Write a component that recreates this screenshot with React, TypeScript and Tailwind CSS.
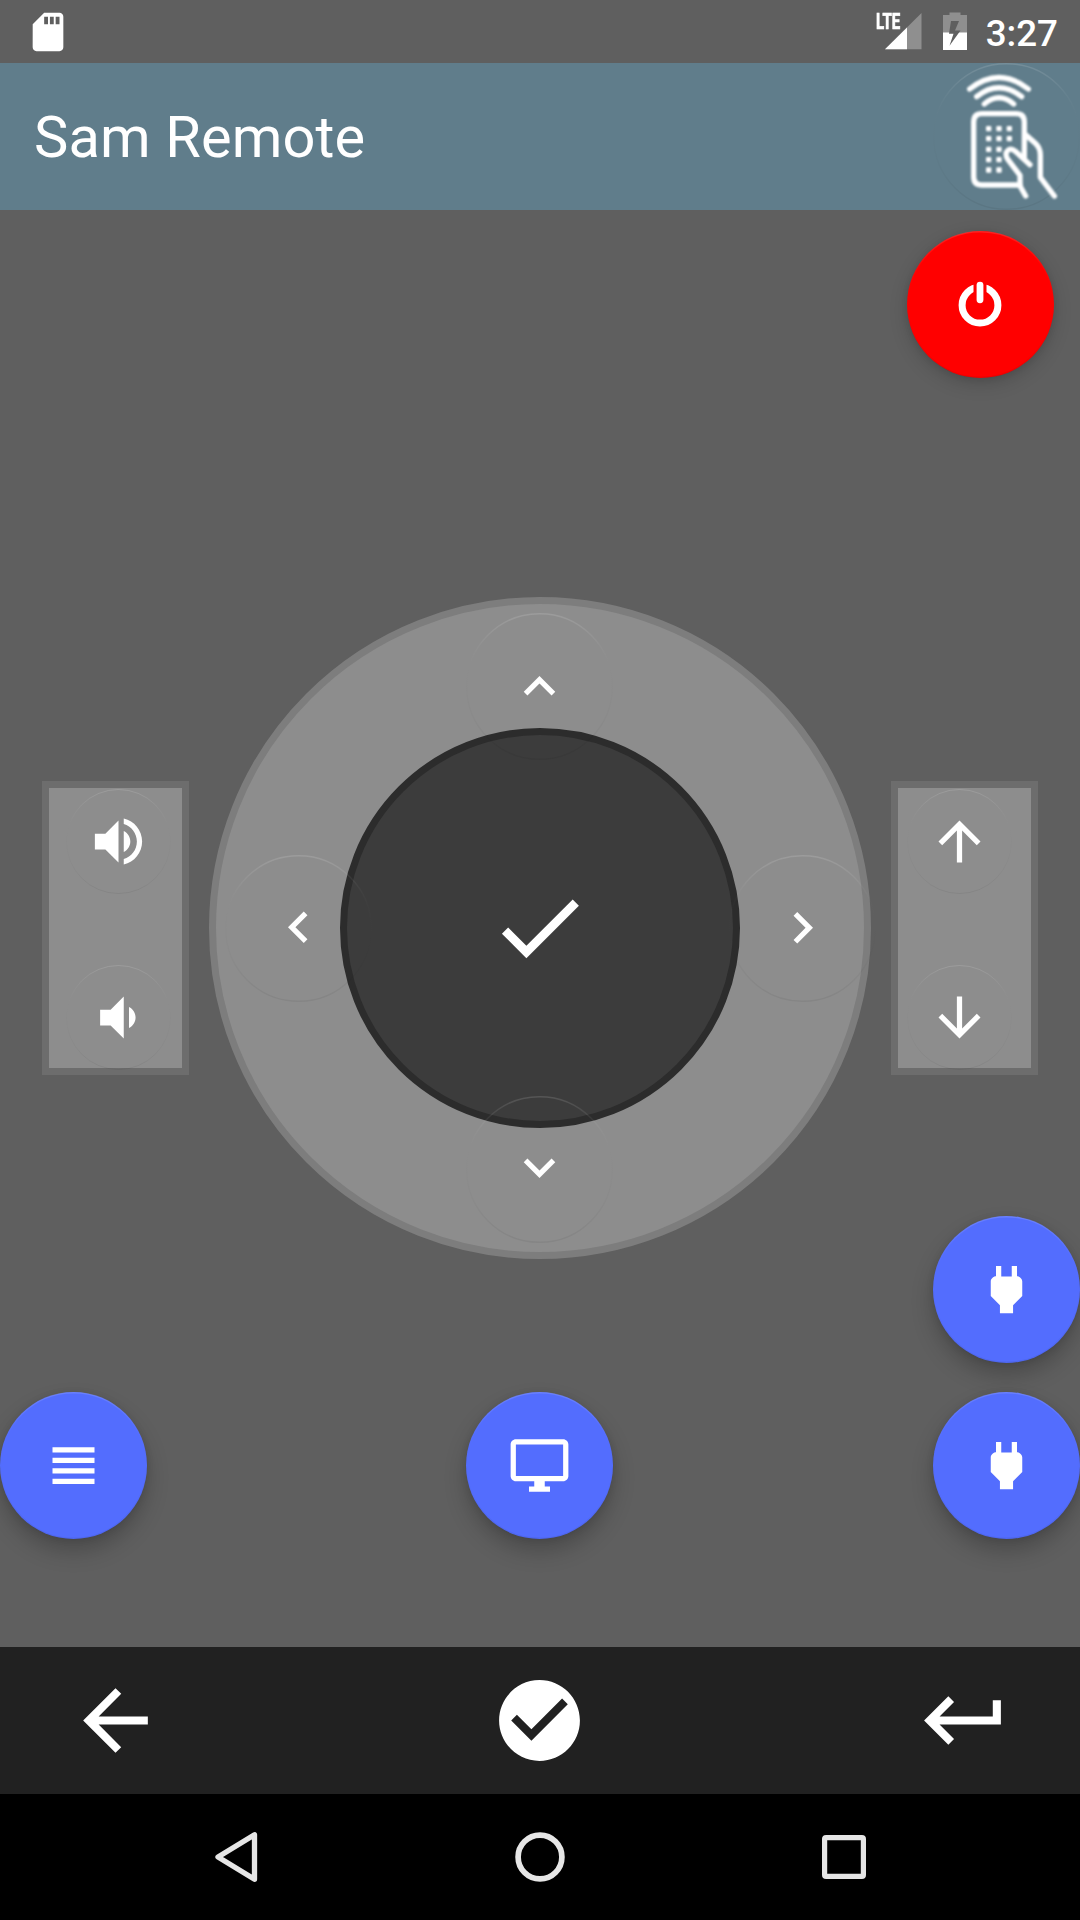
import React from "react";

const paths = {
  sd: "M18 2h-8L4.02 8 4 20c0 1.1.9 2 2 2h12c1.1 0 2-.9 2-2V4c0-1.1-.9-2-2-2zm-6 6h-2V4h2v4zm3 0h-2V4h2v4zm3 0h-2V4h2v4z",
  up: "M7.41 15.41L12 10.83l4.59 4.58L18 14l-6-6-6 6z",
  left: "M15.41 16.09l-4.58-4.59 4.58-4.59L14 5.5l-6 6 6 6z",
  right: "M8.59 16.34l4.58-4.59-4.58-4.59L10 5.75l6 6-6 6z",
  down: "M7.41 7.84L12 12.42l4.59-4.58L18 9.25l-6 6-6-6z",
  check: "M9 16.17L4.83 12l-1.42 1.41L9 19 21 7l-1.41-1.41z",
  volumeUp:
    "M3 9v6h4l5 5V4L7 9H3zm13.5 3c0-1.77-1.02-3.29-2.5-4.03v8.05c1.48-.73 2.5-2.25 2.5-4.02zM14 3.23v2.06c2.89.86 5 3.54 5 6.71s-2.11 5.85-5 6.71v2.06c4.01-.91 7-4.49 7-8.77s-2.99-7.86-7-8.77z",
  volumeDown: "M18.5 12c0-1.77-1.02-3.29-2.5-4.03v8.05c1.48-.73 2.5-2.25 2.5-4.02zM5 9v6h4l5 5V4L9 9H5z",
  arrowUp: "M4 12l1.41 1.41L11 7.83V20h2V7.83l5.58 5.59L20 12l-8-8-8 8z",
  arrowDown: "M20 12l-1.41-1.41L13 16.17V4h-2v12.17l-5.58-5.59L4 12l8 8 8-8z",
  plug: "M16.01 7L16 3h-2v4h-4V3H8v4h-.01C7 6.99 6 7.99 6 8.99v5.49L9.5 18v3h5v-3l3.5-3.51v-5.5c0-1-1-2-1.99-1.99z",
  lines: "M4 15h16v-2H4v2zm0 4h16v-2H4v2zm0-8h16V9H4v2zm0-6v2h16V5H4z",
  monitor:
    "M21 2H3c-1.1 0-2 .9-2 2v12c0 1.1.9 2 2 2h7v2H8v2h8v-2h-2v-2h7c1.1 0 2-.9 2-2V4c0-1.1-.9-2-2-2zm0 14H3V4h18v12z",
  back: "M20 11H7.83l5.59-5.59L12 4l-8 8 8 8 1.41-1.41L7.83 13H20v-2z",
  checkCircle:
    "M12 2C6.48 2 2 6.48 2 12s4.480 10 10 10 10-4.480 10-10S17.520 2 12 2zm-2 15l-5-5 1.410-1.410L10 14.170l7.590-7.590L19 8l-9 9z",
  enter: "M19 7v4H5.83l3.58-3.59L8 6l-6 6 6 6 1.41-1.41L5.83 13H21V7z",
};

function Icon({ d, className = "size-[63px]" }: { d: string; className?: string }) {
  return (
    <svg viewBox="0 0 24 24" fill="currentColor" className={`shrink-0 ${className}`}>
      <path d={d} />
    </svg>
  );
}

/* Hairline highlight and shade that outlines every floating button. */
function Rim() {
  const id = React.useId();
  return (
    <svg viewBox="0 0 147 147" className="absolute inset-0 size-full">
      <defs>
        <linearGradient id={id} x1="0" y1="0" x2="0" y2="1">
          <stop offset="0" stopColor="#fff" stopOpacity="0.13" />
          <stop offset="0.22" stopColor="#fff" stopOpacity="0.03" />
          <stop offset="0.35" stopColor="#888" stopOpacity="0.02" />
          <stop offset="0.7" stopColor="#000" stopOpacity="0.02" />
          <stop offset="1" stopColor="#000" stopOpacity="0.06" />
        </linearGradient>
      </defs>
      <circle cx="73.5" cy="73.5" r="72.8" fill="none" stroke={`url(#${id})`} strokeWidth="1.4" />
    </svg>
  );
}

function RoundButton({
  label,
  className = "size-[147px]",
  children,
}: {
  label: string;
  className?: string;
  children: React.ReactNode;
}) {
  return (
    <button aria-label={label} className={`flex shrink-0 items-center justify-center rounded-full ${className}`}>
      <Rim />
      {children}
    </button>
  );
}

const blue =
  "relative size-[147px] bg-[#536dfe] shadow-[0_12px_22px_rgba(0,0,0,0.22),0_1px_7px_rgba(0,0,0,0.1)]";

function StatusBar() {
  return (
    <div className="flex h-[63px] items-center justify-between pr-[22px] pl-[24.5px]">
      <Icon d={paths.sd} className="size-[46px]" />
      <div className="flex h-full items-center">
        <div className="relative">
          <svg viewBox="0 0 46 63" className="h-[63px] w-[46px]">
            <path d="M45.5 13v36.3H9z" fill="#8f8f8f" />
            <path d="M31 27.6v21.7H9z" fill="#fff" />
          </svg>
          <span className="absolute top-[10px] left-0 origin-left scale-x-[0.67] text-[22.5px] leading-[22px] font-bold [-webkit-text-stroke:0.7px_white]">
            LTE
          </span>
        </div>
        <svg viewBox="0 0 24 63" className="ml-[21px] h-[63px] w-6">
          <path d="M6.5 12.4h11V15H24v17.5H0V15h6.5z" fill="#8f8f8f" />
          <path d="M0 32.4h24V50H0z" fill="#fff" />
          <path d="M8 21h8l-4 9.5h5.5L6.5 45.8l4-12.1H6z" fill="#5f5f5f" />
        </svg>
        <span className="ml-[19px] text-[36.75px] leading-[44px] font-medium">
          <span className="relative top-[2px]">3:27</span>
        </span>
      </div>
    </div>
  );
}

const dots = [
  [446, 386], [477, 386], [508, 386],
  [446, 416], [477, 416], [508, 416],
  [446, 448], [477, 448],
  [446, 479], [477, 479],
  [446, 510], [477, 510],
];

function RemoteIcon() {
  return (
    <svg viewBox="279 189 441 441" className="size-[147px] blur-[0.8px]">
      <g fill="none" stroke="#fff" strokeWidth="16" strokeLinecap="round" strokeLinejoin="round">
        <path d="M389 267Q477 198 565 267M410 290Q477 237 545 290M433 312Q477 275 521 312" />
        <path d="M553 475V366Q553 341 528 341H426Q401 341 401 366V530Q401 555 426 555H540" />
        <path d="M570 494L526 454Q511 441 501 454Q494 464 504 479L540 526V558L557 588" />
        <path d="M557 404L586 430Q601 444 601 465V532L643 588" />
      </g>
      {dots.map(([x, y]) => (
        <rect key={`${x}-${y}`} x={x - 8} y={y - 8} width="16" height="16" rx="3" fill="#fff" />
      ))}
    </svg>
  );
}

function AppBar() {
  return (
    <header className="flex h-[147px] items-center justify-between overflow-hidden bg-[#607d8b] pl-[34px]">
      <h1 className="text-[57.75px] leading-[68px] tracking-[0.14px]">Sam Remote</h1>
      <RoundButton label="Remotes" className="relative size-[147px]">
        <RemoteIcon />
      </RoundButton>
    </header>
  );
}

function Rocker({ className, top, bottom }: { className: string; top: [string, string]; bottom: [string, string] }) {
  return (
    <div
      className={`flex h-[294px] w-[147px] shrink-0 flex-col gap-[71px] border-[7px] border-[#6d6d6d] bg-[#8d8d8d] pt-px ${className}`}
    >
      {[top, bottom].map(([label, d]) => (
        <RoundButton key={label} label={label} className="relative size-[105px]">
          <Icon d={d} />
        </RoundButton>
      ))}
    </div>
  );
}

function DirectionPad() {
  return (
    <div className="relative flex size-[662px] shrink-0 items-center justify-center rounded-full border-[7px] border-[#7d7d7d] bg-[#8d8d8d]">
      <button
        aria-label="Select"
        className="flex size-[400px] items-center justify-center rounded-full border-[7px] border-[#2c2c2c] bg-[#3c3c3c] pr-px pb-px"
      >
        <Icon d={paths.check} className="size-[105px]" />
      </button>
      <RoundButton label="Up" className="absolute top-[9px] left-[250px] size-[147px]">
        <Icon d={paths.up} />
      </RoundButton>
      <RoundButton label="Left" className="absolute top-[251px] left-[9px] size-[147px]">
        <Icon d={paths.left} />
      </RoundButton>
      <RoundButton label="Right" className="absolute top-[251px] left-[513px] size-[147px]">
        <Icon d={paths.right} />
      </RoundButton>
      <RoundButton label="Down" className="absolute top-[492px] left-[250px] size-[147px]">
        <Icon d={paths.down} />
      </RoundButton>
    </div>
  );
}

function PowerIcon() {
  return (
    <svg viewBox="0 0 48 48" className="size-12">
      <circle cx="24" cy="24.2" r="17.9" fill="none" stroke="#fff" strokeWidth="7" />
      <path d="M17.5 0h13v20h-13z" fill="#f00" />
      <rect x="20.6" y="0.7" width="6.8" height="21.5" rx="3.4" fill="#fff" />
    </svg>
  );
}

export default function App() {
  return (
    <div className="flex h-[1920px] w-[1080px] flex-col overflow-hidden bg-[#5f5f5f] font-[Roboto,sans-serif] text-white">
      <StatusBar />
      <AppBar />
      <main className="flex h-[1437px] flex-col">
        <div className="flex justify-end pt-[21px] pr-[26px]">
          <RoundButton
            label="Power"
            className="relative size-[147px] bg-[#ff0000] pr-px shadow-[0_6px_18px_rgba(0,0,0,0.17),0_1px_6px_rgba(0,0,0,0.08)]"
          >
            <PowerIcon />
          </RoundButton>
        </div>
        <div className="mt-[219px] flex items-center justify-center gap-5">
          <Rocker className="pl-[17px]" top={["Volume up", paths.volumeUp]} bottom={["Volume down", paths.volumeDown]} />
          <DirectionPad />
          <Rocker className="pl-[9px]" top={["Channel up", paths.arrowUp]} bottom={["Channel down", paths.arrowDown]} />
        </div>
        <div className="-mt-[43px] flex justify-end">
          <RoundButton label="Source" className={blue}>
            <Icon d={paths.plug} />
          </RoundButton>
        </div>
        <div className="mt-[29px] flex">
          <RoundButton label="Menu" className={blue}>
            <Icon d={paths.lines} />
          </RoundButton>
          <div className="ml-[319px] flex flex-1 justify-between">
            <RoundButton label="Display" className={blue}>
              <Icon d={paths.monitor} />
            </RoundButton>
            <RoundButton label="Input" className={blue}>
              <Icon d={paths.plug} />
            </RoundButton>
          </div>
        </div>
      </main>
      <div className="flex h-[147px] items-center justify-between bg-[#212121] px-[67px]">
        <Icon d={paths.back} className="size-[97px]" />
        <Icon d={paths.checkCircle} className="mr-px size-[97px]" />
        <Icon d={paths.enter} className="size-[97px]" />
      </div>
      <nav className="flex h-[126px] items-center justify-center gap-[248px] bg-black text-[#e6e6e6]">
        <svg viewBox="0 0 56 56" className="size-14" fill="none" stroke="currentColor">
          <path d="M10 28L46.5 5.7V50.3z" strokeWidth="5.3" strokeLinejoin="round" />
        </svg>
        <svg viewBox="0 0 56 56" className="size-14" fill="none" stroke="currentColor">
          <circle cx="28" cy="28" r="21.9" strokeWidth="5.7" />
        </svg>
        <svg viewBox="0 0 56 56" className="size-14" fill="none" stroke="currentColor">
          <rect x="8.6" y="8.6" width="38.8" height="38.8" rx="1.5" strokeWidth="5.2" />
        </svg>
      </nav>
    </div>
  );
}
